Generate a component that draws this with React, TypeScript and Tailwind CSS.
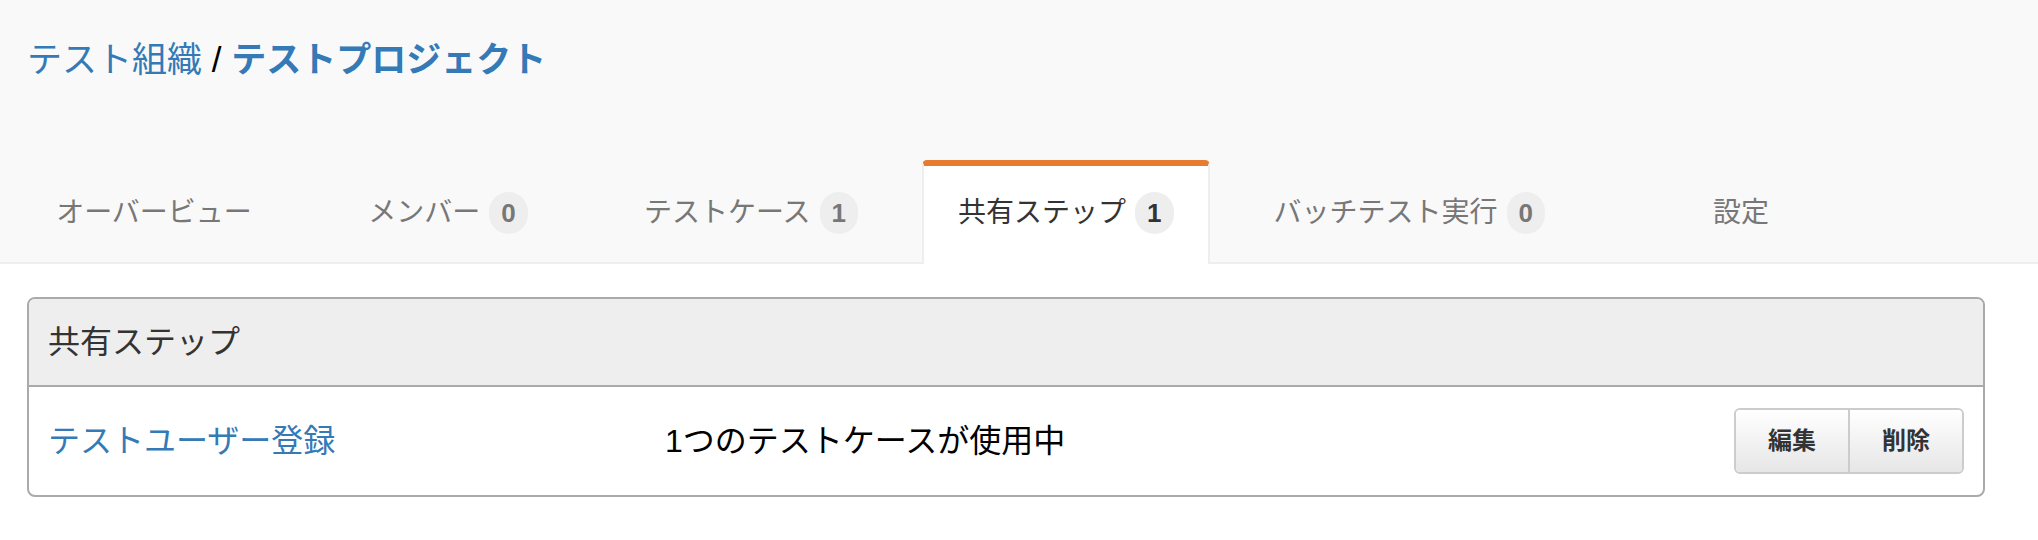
import React from 'react'

const tabs = [
    { name: 'オーバービュー', count: null as number | null },
    { name: 'メンバー', count: 0 },
    { name: 'テストケース', count: 1 },
    { name: '共有ステップ', count: 1, active: true },
    { name: 'バッチテスト実行', count: 0 },
    { name: '設定', count: null },
]

function Badge({ value, active }: { value: number; active?: boolean }) {
    return (
        <span
            className={`ml-[9px] flex h-[42px] items-center rounded-full bg-[#eeeeee] px-[12px] text-[26px] font-bold leading-none ${
                active ? 'text-[#333333]' : 'text-[#777777]'
            }`}
        >
            {value}
        </span>
    )
}

export default function App() {
    return (
        <div
            className="min-h-screen bg-white"
            style={{ fontFamily: '"Liberation Sans", "Noto Sans CJK JP", sans-serif' }}
        >
            <div className="border-b-2 border-[#eeeeee] bg-[#f9f9f9]">
                <h1 className="px-[27px] pt-[40px] text-[35px] leading-[40px] text-[#337ab7]">
                    <a href="#">テスト組織</a>
                    <span className="text-black"> / </span>
                    <a href="#" className="font-bold">テストプロジェクト</a>
                </h1>
                <nav className="-mb-[2px] mt-[80px] flex gap-[30px] pl-[22px]">
                    {tabs.map((tab) => (
                        <a
                            key={tab.name}
                            href="#"
                            className={`flex h-[104px] min-w-[264px] items-center justify-center rounded-t-[5px] border-t-[6px] px-[34px] pb-[4px] text-[28px] ${
                                tab.active
                                    ? 'border-x-2 border-x-[#eeeeee] border-t-[#e57c31] bg-white text-[#333333]'
                                    : 'border-t-transparent text-[#777777]'
                            }`}
                        >
                            <span>{tab.name}</span>
                            {tab.count !== null && <Badge value={tab.count} active={tab.active} />}
                        </a>
                    ))}
                </nav>
            </div>

            <div className="pl-[27px] pr-[53px] pt-[33px]">
                <div className="overflow-hidden rounded-[8px] border-2 border-[#aaaaaa]">
                    <div className="flex h-[88px] items-center border-b-2 border-[#aaaaaa] bg-[#eeeeee] px-[19px] text-[32px] text-[#333333]">
                        共有ステップ
                    </div>
                    <div className="flex h-[108px] items-center px-[19px] text-[32px]">
                        <a href="#" className="w-[617px] text-[#337ab7]">テストユーザー登録</a>
                        <span className="flex-1 text-black">1つのテストケースが使用中</span>
                        <div className="flex h-[66px] overflow-hidden rounded-[6px] border-2 border-[#cccccc] text-[24px] font-bold text-[#333333]">
                            <button className="w-[112px] bg-gradient-to-b from-white to-[#e6e6e6]">編集</button>
                            <button className="w-[114px] border-l-2 border-[#cccccc] bg-gradient-to-b from-white to-[#e6e6e6]">削除</button>
                        </div>
                    </div>
                </div>
            </div>
        </div>
    )
}
